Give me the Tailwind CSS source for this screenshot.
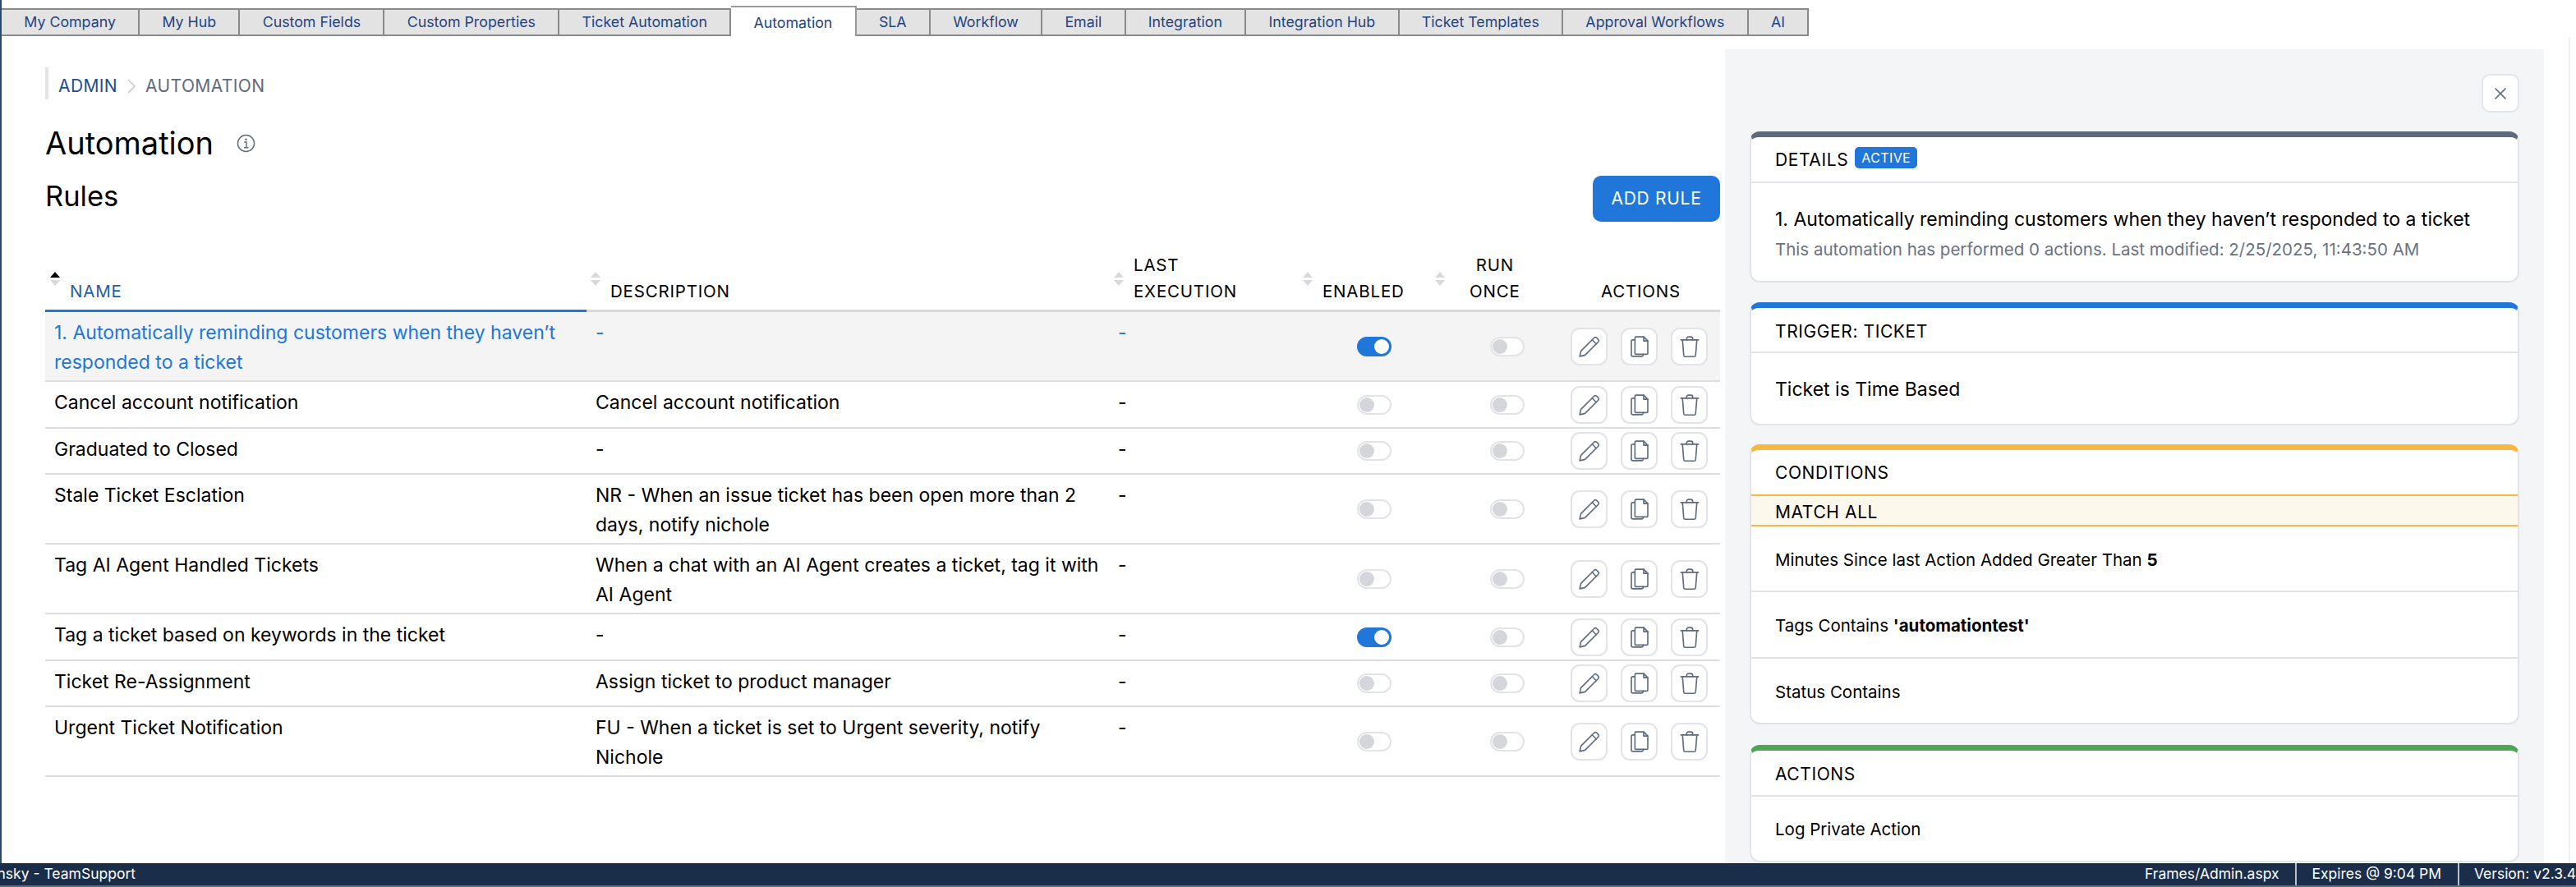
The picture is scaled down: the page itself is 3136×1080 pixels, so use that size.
<!DOCTYPE html>
<html lang="en">
<head>
    <meta charset="UTF-8">
    <title>Automation</title>
    <script src="https://cdn.jsdelivr.net/npm/@tailwindcss/browser@4"></script>
</head>
<body class="bg-white font-['Inter',sans-serif] text-black">
    <div class="w-[3136px] h-[1080px] flex flex-col overflow-hidden">
        <div class="flex-1 flex flex-col min-h-0 border-l-2 border-[#2a4a6e]">
            <nav id="tabs" class="h-[44px] shrink-0 flex items-end text-[17.8px] text-[#1f4480]"></nav>

            <div class="flex-1 flex min-h-0">
                <main class="w-[2098px] shrink-0 pl-[53px] pr-[4px]">
                    <div class="mt-[38px] h-[39px] pt-[6px] flex items-center border-l-4 border-[#e4e4e7] pl-[12px] text-[21px] tracking-[0.4px]">
                        <span class="text-[#1f4e8c]">ADMIN</span>
                        <svg class="mx-[11px]" width="12" height="20" viewBox="0 0 12 20" fill="none" stroke="#c4c7cc" stroke-width="1.5"><path d="M2 2l8 8-8 8"/></svg>
                        <span class="text-[#5f6b7a]">AUTOMATION</span>
                    </div>
                    <div class="mt-[29px] h-[48px] flex items-center">
                        <h1 class="text-[38px] leading-[48px] font-normal">Automation</h1>
                        <svg class="ml-[28px]" width="23" height="23" viewBox="0 0 24 24" fill="none" stroke="#5f6b7a" stroke-width="1.5"><circle cx="12" cy="12" r="10.5"/><path d="M9.5 10.5h3v7M9.5 17.5h5.5"/><circle cx="12" cy="7" r="0.6"/></svg>
                    </div>
                    <div class="mt-[16px] flex justify-between items-start">
                        <h2 class="mt-[3px] text-[34.5px] leading-[44px] font-normal">Rules</h2>
                        <button class="mr-[2px] w-[155px] h-[56px] rounded-[10px] bg-[#2176d9] text-white text-[21px] tracking-[0.7px]">ADD RULE</button>
                    </div>

                    <table class="mt-[35px] w-[2039px] table-fixed border-collapse">
                        <colgroup>
                            <col class="w-[659px]"><col class="w-[636px]"><col class="w-[230px]"><col class="w-[161px]"><col class="w-[139px]"><col class="w-[214px]">
                        </colgroup>
                        <thead id="head"></thead>
                        <tbody id="rows"></tbody>
                    </table>
                </main>

                <aside class="w-[997px] shrink-0 mt-[16px] bg-[#f4f5f7] px-[30px] overflow-hidden">
                    <div class="mt-[30px] flex justify-end">
                        <button class="w-[46px] h-[47px] rounded-[10px] bg-white border-2 border-[#e4e5ea] flex items-center justify-center">
                            <svg width="16" height="16" viewBox="0 0 16 16" fill="none" stroke="#5f6b7a" stroke-width="1.6"><path d="M1.500 1.500l13 13M14.500 1.500l-13 13"/></svg>
                        </button>
                    </div>

                    <section class="mt-[23px] h-[184px] rounded-[12px] bg-white border-2 border-t-[7px] border-[#e2e3e8] border-t-[#5f6b7a] overflow-hidden">
                        <div class="h-[56px] pt-[2px] border-b-2 border-[#e2e3e8] pl-[29px] flex items-center text-[21px] tracking-[0.6px]">
                            DETAILS
                            <span class="ml-[8px] -mt-[7px] h-[26px] px-[8px] rounded-[5px] bg-[#2176d9] text-white text-[16px] leading-[26px] tracking-[0.4px]">ACTIVE</span>
                        </div>
                        <p class="mt-[26px] pl-[29px] text-[23px] leading-[36px]">1. Automatically reminding customers when they haven’t responded to a ticket</p>
                        <p class="mt-[3px] pl-[29px] text-[20.5px] leading-[32px] text-[#6b7280]">This automation has performed 0 actions. Last modified: 2/25/2025, 11:43:50 AM</p>
                    </section>

                    <section class="mt-[24px] h-[150px] rounded-[12px] bg-white border-2 border-t-[7px] border-[#e2e3e8] border-t-[#2176d9] overflow-hidden">
                        <div class="h-[55px] pt-[4px] border-b-2 border-[#e2e3e8] pl-[29px] flex items-center text-[21px] tracking-[0.6px]">TRIGGER: TICKET</div>
                        <div class="h-[84px] pt-[4px] pl-[29px] flex items-center text-[23px]">Ticket is Time Based</div>
                    </section>

                    <section class="mt-[23px] h-[341px] rounded-[12px] bg-white border-2 border-t-[7px] border-[#e2e3e8] border-t-[#f6b845] overflow-hidden">
                        <div class="h-[56px] pt-[2px] border-b-2 border-[#f6b845] pl-[29px] flex items-center text-[21px] tracking-[0.6px]">CONDITIONS</div>
                        <div class="h-[37px] pt-[4px] border-b-2 border-[#f6b845] bg-[#fdf8ec] pl-[29px] flex items-center text-[21px] tracking-[0.6px]">MATCH ALL</div>
                        <div class="h-[80px] pt-[4px] border-b-2 border-[#e2e3e8] pl-[29px] flex items-center text-[20.5px]"><span>Minutes Since last Action Added Greater Than <b>5</b></span></div>
                        <div class="h-[81px] pt-[4px] border-b-2 border-[#e2e3e8] pl-[29px] flex items-center text-[20.5px]"><span>Tags Contains <b>'automationtest'</b></span></div>
                        <div class="h-[79px] pt-[4px] pl-[29px] flex items-center text-[20.5px]">Status Contains</div>
                    </section>

                    <section class="mt-[25px] h-[143px] rounded-[12px] bg-white border-2 border-t-[7px] border-[#e2e3e8] border-t-[#4fa556] overflow-hidden">
                        <div class="h-[56px] pt-[4px] border-b-2 border-[#e2e3e8] pl-[29px] flex items-center text-[21px] tracking-[0.6px]">ACTIONS</div>
                        <div class="h-[78px] pt-[2px] pl-[29px] flex items-center text-[20.5px]">Log Private Action</div>
                    </section>
                </aside>

                <div class="flex-1 mt-[2px] flex pl-[30px]"><div class="w-[2px] bg-[#eeeeee]"></div></div>
            </div>
        </div>

        <footer class="h-[27px] shrink-0 bg-[#1a2e4a] text-white text-[17.5px] flex items-center overflow-hidden">
            <span class="-ml-[2px] w-[167px] shrink-0 whitespace-nowrap flex justify-end">nsky - TeamSupport</span>
            <span class="ml-[2446px] w-[184px] whitespace-nowrap">Frames/Admin.aspx</span>
            <span class="h-[27px] w-[2px] bg-white/70"></span>
            <span class="ml-[18px] w-[178px] whitespace-nowrap">Expires @ 9:04 PM</span>
            <span class="h-[27px] w-[2px] bg-white/70"></span>
            <span class="ml-[18px] whitespace-nowrap">Version: v2.3.4</span>
        </footer>
        <div class="h-[2px] shrink-0 bg-[#5d6d80]"></div>
    </div>

    <script>
        const tabs = ['My Company', 'My Hub', 'Custom Fields', 'Custom Properties', 'Ticket Automation', 'Automation', 'SLA', 'Workflow', 'Email', 'Integration', 'Integration Hub', 'Ticket Templates', 'Approval Workflows', 'AI'];
        document.getElementById('tabs').innerHTML = tabs.map((t, i) => {
            if (t === 'Automation') {
                return `<div class="h-[37px] px-[27.25px] pt-[3px] bg-white border-t-2 border-r-2 border-[#9a9a9a] flex items-center">${t}</div>`;
            }
            return `<div class="h-[34px] px-[27.25px] pt-[1px] bg-[#e3e3e3] border-y-2 border-r-2 border-[#8a8a8a] flex items-center">${t}</div>`;
        }).join('');

        const sortIcon = (active) => `<svg class="mt-[26px] shrink-0" width="12" height="17" viewBox="0 0 12 17"><path d="M6 0l6 7H0z" fill="${active ? '#000' : '#d8d9de'}"/><path d="M6 17L0 10h12z" fill="#d8d9de"/></svg>`;

        const head = `<tr>
            <th class="p-0 border-b-[3px] border-[#2176d9] font-normal"><div class="h-[72px] pl-[6px] flex">${sortIcon(true)}<span class="self-end pb-[6px] ml-[12px] text-[20.5px] leading-[32px] tracking-[0.8px] text-[#1f5fa8]">NAME</span></div></th>
            <th class="p-0 border-b-[3px] border-[#d8d9de] font-normal"><div class="h-[72px] pl-[5px] flex">${sortIcon(false)}<span class="self-end pb-[6px] ml-[12px] text-[20.5px] leading-[32px] tracking-[0.8px]">DESCRIPTION</span></div></th>
            <th class="p-0 border-b-[3px] border-[#d8d9de] font-normal"><div class="h-[72px] pl-[6px] flex">${sortIcon(false)}<span class="self-end pb-[6px] ml-[12px] text-[20.5px] leading-[32px] tracking-[0.8px] text-left">LAST<br>EXECUTION</span></div></th>
            <th class="p-0 border-b-[3px] border-[#d8d9de] font-normal"><div class="h-[72px] pl-[6px] flex">${sortIcon(false)}<span class="self-end pb-[6px] ml-[12px] text-[20.5px] leading-[32px] tracking-[0.8px]">ENABLED</span></div></th>
            <th class="p-0 border-b-[3px] border-[#d8d9de] font-normal"><div class="h-[72px] pl-[6px] flex">${sortIcon(false)}<span class="self-end pb-[6px] ml-[30px] text-[20.5px] leading-[32px] tracking-[0.8px]">RUN<br>ONCE</span></div></th>
            <th class="p-0 border-b-[3px] border-[#d8d9de] font-normal"><div class="h-[72px] pl-[69px] flex"><span class="self-end pb-[6px] text-[20.5px] leading-[32px] tracking-[0.8px]">ACTIONS</span></div></th>
        </tr>`;
        document.getElementById('head').innerHTML = head;

        const rules = [
            ['1. Automatically reminding customers when they haven’t responded to a ticket', '-', true],
            ['Cancel account notification', 'Cancel account notification', false],
            ['Graduated to Closed', '-', false],
            ['Stale Ticket Esclation', 'NR - When an issue ticket has been open more than 2 days, notify nichole', false],
            ['Tag AI Agent Handled Tickets', 'When a chat with an AI Agent creates a ticket, tag it with AI Agent', false],
            ['Tag a ticket based on keywords in the ticket', '-', true],
            ['Ticket Re-Assignment', 'Assign ticket to product manager', false],
            ['Urgent Ticket Notification', 'FU - When a ticket is set to Urgent severity, notify Nichole', false],
        ];

        const toggle = (on) => on
            ? `<div class="w-[42px] h-[24px] rounded-full bg-[#2176d9] flex items-center justify-end pr-[3px]"><div class="w-[18px] h-[18px] rounded-full bg-white"></div></div>`
            : `<div class="w-[42px] h-[24px] rounded-full bg-white border-2 border-[#e2e3e6] flex items-center pl-[1px]"><div class="w-[18px] h-[18px] rounded-full bg-[#d5d6db]"></div></div>`;

        const iconBtn = (path) => `<button class="w-[45px] h-[46px] rounded-[11px] bg-white border-2 border-[#e2e3e6] flex items-center justify-center"><svg width="30" height="30" viewBox="0 0 24 24" fill="none" stroke="#5f6b7a" stroke-width="1.3" stroke-linejoin="round" stroke-linecap="round">${path}</svg></button>`;
        const pencil = '<path d="M2.500 21.500l1.200-5.200L16.600 3.400a1.600 1.600 0 0 1 2.300 0l1.700 1.700a1.600 1.600 0 0 1 0 2.300L7.700 20.300z"/><path d="M14.600 5.400l4 4"/>';
        const copy = '<path d="M8.500 2.500h7.500l4 4v12a1 1 0 0 1-1 1h-10.500a1 1 0 0 1-1-1v-15a1 1 0 0 1 1-1z"/><path d="M16 2.500v4h4"/><path d="M7 5.500h-1.500a1.500 1.500 0 0 0-1.500 1.500v13a1.500 1.500 0 0 0 1.500 1.500h8.500a1.500 1.500 0 0 0 1.500-1.500v-0.500"/>';
        const trash = '<path d="M3.500 5.500h17"/><path d="M9 5.500v-1a2 2 0 0 1 2-2h2a2 2 0 0 1 2 2v1"/><path d="M5 5.500l1.200 15a1.500 1.500 0 0 0 1.500 1.300h8.600a1.500 1.500 0 0 0 1.500-1.300l1.200-15"/>';

        // rows alternate 57/56 px in the reference, the single line ones that is
        const tall = [1, 5];

        document.getElementById('rows').innerHTML = rules.map((r, i) => {
            const sel = i === 0;
            const text = sel ? 'text-[#2176d9]' : 'text-black';
            const pad = tall.includes(i) ? 'pt-[5px] pb-[4px]' : 'pt-[4px] pb-[4px]';
            return `<tr class="border-b-2 border-[#dcdde0] ${sel ? 'bg-[#f4f4f4]' : ''}">
                <td class="align-top pt-[7px] pb-[4px] pl-[11px] pr-[20px] text-[23px] leading-[36px] ${text}">${r[0]}</td>
                <td class="align-top pt-[7px] pb-[4px] pl-[11px] pr-[6px] text-[23px] leading-[36px] ${text}">${r[1]}</td>
                <td class="align-top pt-[7px] pb-[4px] pl-[11px] text-[23px] leading-[36px] ${text}">-</td>
                <td class="align-middle pl-[72px]">${toggle(r[2])}</td>
                <td class="align-middle pl-[73px]">${toggle(false)}</td>
                <td class="align-middle pl-[32px]"><div class="flex gap-[16px] ${pad}">${iconBtn(pencil)}${iconBtn(copy)}${iconBtn(trash)}</div></td>
            </tr>`;
        }).join('');
    </script>
</body>
</html>
